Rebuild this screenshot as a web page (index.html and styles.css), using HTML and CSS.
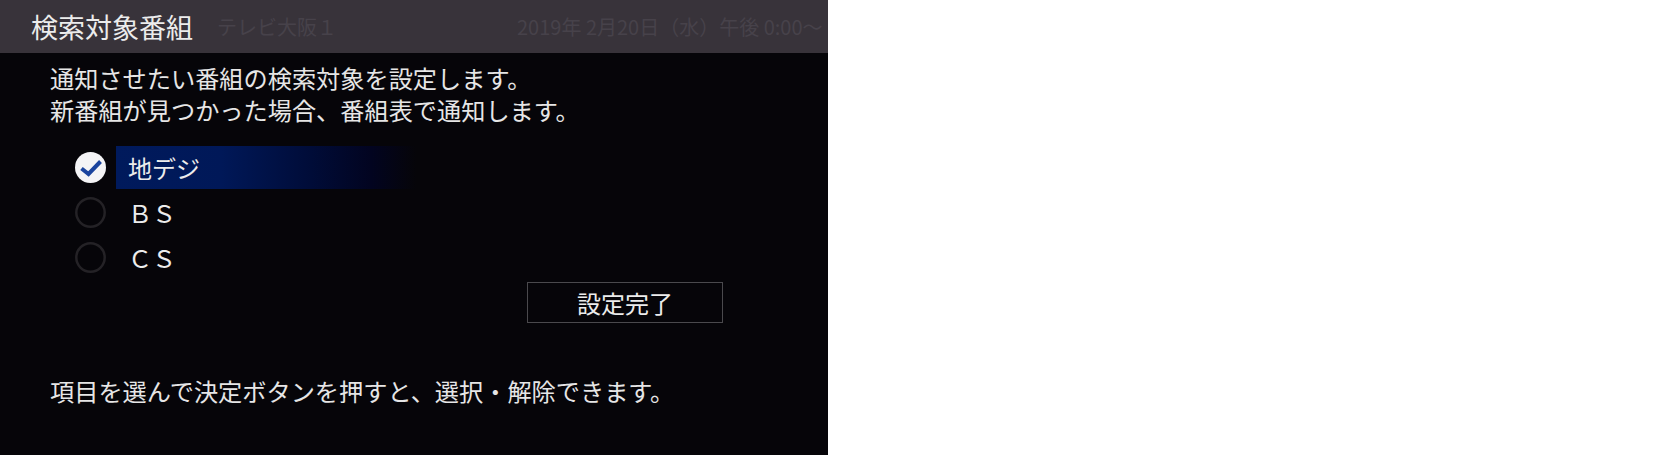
FILE: index.html
```html
<!DOCTYPE html>
<html lang="ja">
<head>
<meta charset="utf-8">
<title>検索対象番組</title>
<link rel="stylesheet" href="styles.css">
</head>
<body>
<div class="screen">
  <header class="header">
    <span class="title">検索対象番組</span>
    <span class="channel">テレビ大阪１</span>
    <span class="date">2019年 2月20日（水）午後 0:00～</span>
  </header>
  <div class="intro">
    <p>通知させたい番組の検索対象を設定します。</p>
    <p>新番組が見つかった場合、番組表で通知します。</p>
  </div>
  <ul class="options">
    <li class="option selected">
      <span class="check">
        <svg viewBox="0 0 31 31" width="31" height="31"><circle cx="15.5" cy="15.5" r="15.5" fill="#f4f4f6"/><path d="M6.5 16.5 L13.5 22 L25.5 9.5" fill="none" stroke="#1b449e" stroke-width="4"/></svg>
      </span>
      <span class="label">地デジ</span>
    </li>
    <li class="option">
      <span class="check">
        <svg viewBox="0 0 31 31" width="31" height="31"><circle cx="15.5" cy="15.5" r="14.2" fill="none" stroke="#242226" stroke-width="2.5"/></svg>
      </span>
      <span class="label">ＢＳ</span>
    </li>
    <li class="option">
      <span class="check">
        <svg viewBox="0 0 31 31" width="31" height="31"><circle cx="15.5" cy="15.5" r="14.2" fill="none" stroke="#242226" stroke-width="2.5"/></svg>
      </span>
      <span class="label">ＣＳ</span>
    </li>
  </ul>
  <div class="actions">
    <button class="done">設定完了</button>
  </div>
  <p class="hint">項目を選んで決定ボタンを押すと、選択・解除できます。</p>
</div>
</body>
</html>
```
FILE: styles.css
```css
html, body {
  margin: 0;
  padding: 0;
  background: #ffffff;
}
.screen {
  width: 828px;
  height: 455px;
  background: #060509;
  overflow: hidden;
  font-family: "Noto Sans CJK JP", "Noto Sans", sans-serif;
  color: #e6e6e6;
}
.header {
  height: 53px;
  background: #38333a;
  display: flex;
  align-items: center;
  padding-left: 31px;
  white-space: nowrap;
  overflow: hidden;
}
.title {
  font-size: 27px;
  line-height: 1;
  color: #ececec;
  flex: none;
}
.channel {
  font-size: 20px;
  line-height: 1;
  color: #47424a;
  margin-left: 24px;
  flex: none;
}
.date {
  font-size: 20px;
  line-height: 1;
  color: #47424a;
  margin-left: 180px;
  flex: none;
}
.intro {
  margin-top: 9px;
  padding-left: 50px;
}
.intro p {
  margin: 0;
  font-size: 24.2px;
  line-height: 32px;
}
.options {
  list-style: none;
  margin: 19px 0 0 0;
  padding: 0;
}
.option {
  display: flex;
  align-items: center;
  height: 45px;
}
.check {
  margin-left: 75px;
  width: 31px;
  height: 31px;
  flex: none;
}
.check svg {
  display: block;
}
.label {
  margin-left: 10px;
  width: 300px;
  height: 43px;
  padding-left: 12px;
  box-sizing: border-box;
  display: flex;
  align-items: center;
  font-size: 24px;
  color: #ececec;
}
.selected .label {
  background: linear-gradient(90deg, #001a5c 0%, #001858 35%, #000c38 65%, #020420 85%, #060509 100%);
}
.actions {
  margin-top: 2px;
  padding-left: 527px;
}
.done {
  width: 196px;
  height: 41px;
  background: transparent;
  border: 1px solid #4a494d;
  color: #ececec;
  font-family: inherit;
  font-size: 24px;
  padding: 0;
  line-height: 1;
}
.hint {
  margin: 52px 0 0 0;
  padding-left: 50px;
  font-size: 24.2px;
  line-height: 32px;
}
```
